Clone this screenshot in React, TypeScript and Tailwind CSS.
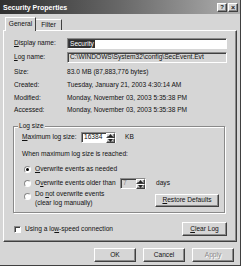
import React from "react";

const raised =
  "border border-t-white border-l-white border-r-[#404040] border-b-[#404040] shadow-[inset_-1px_-1px_0_#8a8a8a]";
const sunken =
  "border border-t-[#8a8a8a] border-l-[#8a8a8a] border-r-white border-b-white shadow-[inset_1px_1px_0_#404040]";

function Btn({ children, className = "", disabled = false }: { children: React.ReactNode; className?: string; disabled?: boolean }) {
  return (
    <div
      className={`flex items-center justify-center bg-[#d6d6d6] ${raised} ${className} ${
        disabled ? "text-[#8a8a8a] [text-shadow:1px_1px_0_#fff]" : ""
      }`}
    >
      {children}
    </div>
  );
}

function Spinner() {
  return (
    <div className="flex flex-col w-[9px] h-full shrink-0">
      <div className={`flex-1 bg-[#d6d6d6] ${raised} flex items-center justify-center`}>
        <svg width="5" height="3" viewBox="0 0 5 3"><path d="M0 3 L2.5 0 L5 3Z" fill="#222" /></svg>
      </div>
      <div className={`flex-1 bg-[#d6d6d6] ${raised} flex items-center justify-center`}>
        <svg width="5" height="3" viewBox="0 0 5 3"><path d="M0 0 L2.5 3 L5 0Z" fill="#222" /></svg>
      </div>
    </div>
  );
}

function Radio({ checked }: { checked?: boolean }) {
  return (
    <div className="w-[7px] h-[7px] rounded-full border border-[#8a8a8a] border-r-white border-b-white bg-white flex items-center justify-center shrink-0">
      {checked && <div className="w-[3px] h-[3px] rounded-full bg-black" />}
    </div>
  );
}

export default function App() {
  return (
    <div className="w-[241px] h-[266px] bg-[#d6d6d6] overflow-hidden flex flex-col font-['Liberation_Sans',Arial,sans-serif] text-[6.6px] leading-none text-[#111] whitespace-nowrap border-r border-b border-r-[#404040] border-b-[#404040]">
      {/* Title bar */}
      <div className="h-[14px] bg-gradient-to-r from-[#303030] via-[#686868] to-[#b0b0b0] flex items-center pl-[3px] pr-[2px]">
        <span className="text-white font-bold text-[7px]">Security Properties</span>
        <div className="ml-auto flex items-center">
          <Btn className="w-[10px] h-[9px] font-bold text-[6px]">?</Btn>
          <Btn className="w-[10px] h-[9px] ml-[1px] font-bold text-[7px]">×</Btn>
        </div>
      </div>

      {/* Tabs */}
      <div className="flex items-end h-[15px] pl-[5px] mt-[1px]">
        <div className="h-[14px] w-[31px] border-t border-l border-r border-t-white border-l-white border-r-[#404040] flex items-center justify-center relative top-[1px] bg-[#d6d6d6] z-10">
          General
        </div>
        <div className="h-[11px] w-[26px] border-t border-r border-t-white border-r-[#404040] flex items-center justify-center">
          Filter
        </div>
      </div>

      {/* Panel */}
      <div className="mx-[3px] h-[212px] border border-t-white border-l-white border-r-[#404040] border-b-[#404040] shadow-[inset_-1px_-1px_0_#8a8a8a] flex flex-col pl-[10px] pr-[9px]">
        <div className="mt-[7px] h-[11px] flex items-center">
          <span className="w-[53px]"><u>D</u>isplay name:</span>
          <div className={`flex-1 h-full bg-white ${sunken} flex items-center pl-[1px]`}>
            <span className="bg-[#303030] text-white px-[1px] leading-[8px]">Security</span>
          </div>
        </div>
        <div className="mt-[3px] h-[11px] flex items-center">
          <span className="w-[53px]"><u>L</u>og name:</span>
          <div className={`flex-1 h-full bg-[#d6d6d6] ${sunken} flex items-center pl-[2px]`}>
            C:\WINDOWS\System32\config\SecEvent.Evt
          </div>
        </div>
        <div className="mt-[3px] flex flex-col">
          <div className="h-[13px] flex items-center"><span className="w-[53px]">Size:</span>83.0 MB (87,883,776 bytes)</div>
          <div className="h-[13px] flex items-center"><span className="w-[53px]">Created:</span>Tuesday, January 21, 2003 4:30:14 AM</div>
          <div className="h-[12px] flex items-center"><span className="w-[53px]">Modified:</span>Monday, November 03, 2003 5:35:38 PM</div>
          <div className="h-[12px] flex items-center"><span className="w-[53px]">Accessed:</span>Monday, November 03, 2003 5:35:38 PM</div>
        </div>

        {/* Group box */}
        <div className="mt-[10px] ml-[-1px] mr-[2px] h-[87px] relative border border-[#8a8a8a] shadow-[1px_1px_0_#fff,inset_1px_1px_0_#fff] flex flex-col pl-[8px] pr-[5px]">
          <span className="absolute -top-[4px] left-[4px] bg-[#d6d6d6] px-[1px]">Log size</span>
          <div className="mt-[5px] h-[11px] flex items-center">
            <span className="w-[59px]"><u>M</u>aximum log size:</span>
            <div className={`w-[35px] h-full bg-white ${sunken} flex items-center`}>
              <span className="flex-1 pl-[2px]">16384</span>
              <Spinner />
            </div>
            <span className="ml-[9px]">KB</span>
          </div>
          <div className="mt-[6px] h-[10px] flex items-center">When maximum log size is reached:</div>
          <div className="mt-[5px] h-[10px] flex items-center pl-[2px]">
            <Radio checked />
            <span className="ml-[4px]"><u>O</u>verwrite events as needed</span>
          </div>
          <div className="mt-[4px] h-[11px] flex items-center pl-[2px]">
            <Radio />
            <span className="ml-[4px] w-[85px]">O<u>v</u>erwrite events older than</span>
            <div className={`w-[26px] h-full bg-[#d6d6d6] ${sunken} flex items-center`}>
              <span className="flex-1 pl-[2px] text-[#8a8a8a]">7</span>
              <Spinner />
            </div>
            <span className="ml-[10px]">days</span>
          </div>
          <div className="mt-[2px] flex items-start pl-[2px]">
            <div className="mt-[2px]"><Radio /></div>
            <div className="ml-[4px] flex flex-col gap-[2px]">
              <span>Do <u>n</u>ot overwrite events</span>
              <span>(clear log manually)</span>
            </div>
            <Btn className="ml-auto mt-[3px] w-[64px] h-[13px]"><span><u>R</u>estore Defaults</span></Btn>
          </div>
        </div>

        <div className="mt-[9px] h-[14px] flex items-center">
          <div className={`w-[7px] h-[7px] bg-white ${sunken}`} />
          <span className="ml-[4px]">Using a lo<u>w</u>-speed connection</span>
          <Btn className="ml-auto w-[45px] h-full"><span><u>C</u>lear Log</span></Btn>
        </div>
      </div>

      {/* Bottom buttons */}
      <div className="mt-[6px] h-[14px] flex pl-[94px] gap-[7px]">
        <Btn className="w-[42px] h-full">OK</Btn>
        <Btn className="w-[42px] h-full">Cancel</Btn>
        <Btn className="w-[42px] h-full" disabled>Apply</Btn>
      </div>
    </div>
  );
}
